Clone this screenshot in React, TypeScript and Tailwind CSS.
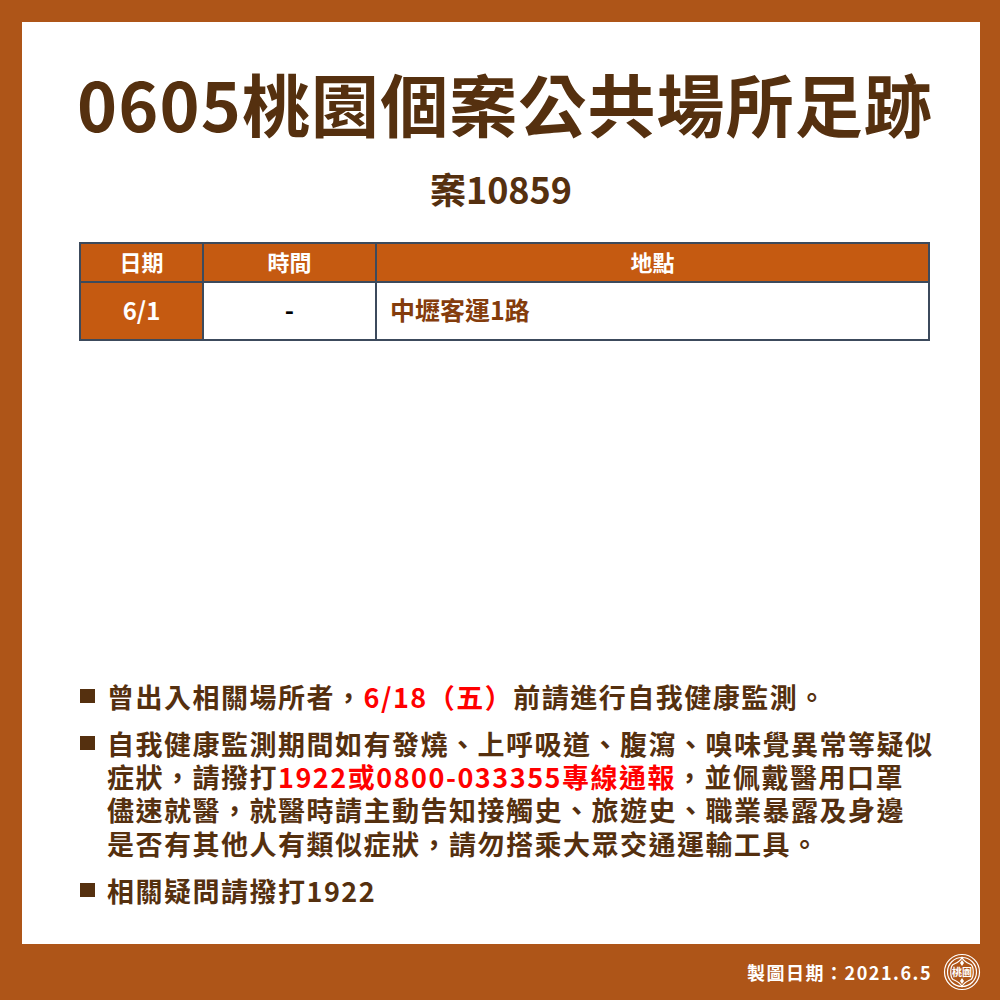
import React from 'react';

const FONT = '"Noto Sans CJK TC", "Noto Sans", sans-serif';

const Logo = () => (
  <svg width="38" height="38" viewBox="0 0 38 38" fill="none" stroke="#fff" strokeWidth="1.2">
    <circle cx="19" cy="19" r="17.5" />
    <circle cx="19" cy="19" r="14.5" />
    <path d="M19 4.5C21 9 25 10 28 11.5C31 14 31 24 28 26.5C25 28 21 29 19 33.5C17 29 13 28 10 26.5C7 24 7 14 10 11.5C13 10 17 9 19 4.5Z" />
    <path d="M19 7l2 3-2 3-2-3zM19 25l2 3-2 3-2-3z" fill="#fff" stroke="none" />
  </svg>
);

const Bullet = ({ children }: { children: React.ReactNode }) => (
  <div className="flex">
    <span className="w-[15px] h-[14px] mt-[9px] bg-[#55300f] shrink-0" />
    <p className="ml-[12px] flex-1">{children}</p>
  </div>
);

const Red = ({ children }: { children: React.ReactNode }) => (
  <span className="text-[#ff0000]">{children}</span>
);

export default function App() {
  return (
    <div lang="zh-Hant-TW" className="w-[1000px] h-[1000px] bg-[#ae5518] flex flex-col overflow-hidden" style={{ fontFamily: FONT }}>
      <main className="ml-[22px] mt-[22px] w-[958px] h-[922px] bg-white flex flex-col">
        <h1 className="mt-[41px] pl-[8px] text-center text-[68px] leading-[80px] font-bold text-[#55300f] tracking-[1.1px]">
          0605桃園個案公共場所足跡
        </h1>
        <h2 className="mt-[23px] text-center text-[36px] leading-[44px] font-bold text-[#55300f]">案10859</h2>

        <div className="ml-[57px] mt-[32px] w-[851px] border-2 border-[#3c4a5c] font-bold">
          <div className="flex h-[39px] bg-[#c55a11] text-white text-[22px] leading-[34px] text-center border-b-2 border-[#3c4a5c]">
            <div className="w-[123px] border-r-2 border-[#3c4a5c]">日期</div>
            <div className="w-[173px] border-r-2 border-[#3c4a5c]">時間</div>
            <div className="flex-1">地點</div>
          </div>
          <div className="flex h-[56px] leading-[53px] text-[24px]">
            <div className="w-[123px] bg-[#c55a11] text-white text-center border-r-2 border-[#3c4a5c]">6/1</div>
            <div className="w-[173px] text-black text-center border-r-2 border-[#3c4a5c] text-[25px]">-</div>
            <div className="flex-1 pl-[13px] text-[#843c0c] text-[25px]">中壢客運1路</div>
          </div>
        </div>

        <div className="mt-auto mb-[37px] ml-[58px] w-[860px] text-[27px] leading-[33.3px] font-bold text-[#55300f] tracking-[1.5px] flex flex-col gap-[13.7px]">
          <Bullet>曾出入相關場所者，<Red>6/18（五）</Red>前請進行自我健康監測。</Bullet>
          <Bullet>
            自我健康監測期間如有發燒、上呼吸道、腹瀉、嗅味覺異常等疑似
            <br />
            症狀，請撥打<Red>1922或0800-033355專線通報</Red>，並佩戴醫用口罩
            <br />
            儘速就醫，就醫時請主動告知接觸史、旅遊史、職業暴露及身邊
            <br />
            是否有其他人有類似症狀，請勿搭乘大眾交通運輸工具。
          </Bullet>
          <Bullet>相關疑問請撥打1922</Bullet>
        </div>
      </main>
      <footer className="flex-1 flex items-center justify-end pr-[19px] gap-[11px] text-white text-[18px] font-bold tracking-[1.5px]">
        <span>製圖日期：2021.6.5</span>
        <div className="relative w-[38px] h-[38px]">
          <Logo />
          <span className="absolute inset-0 flex items-center justify-center text-[10px] leading-none tracking-normal">桃園</span>
        </div>
      </footer>
    </div>
  );
}
